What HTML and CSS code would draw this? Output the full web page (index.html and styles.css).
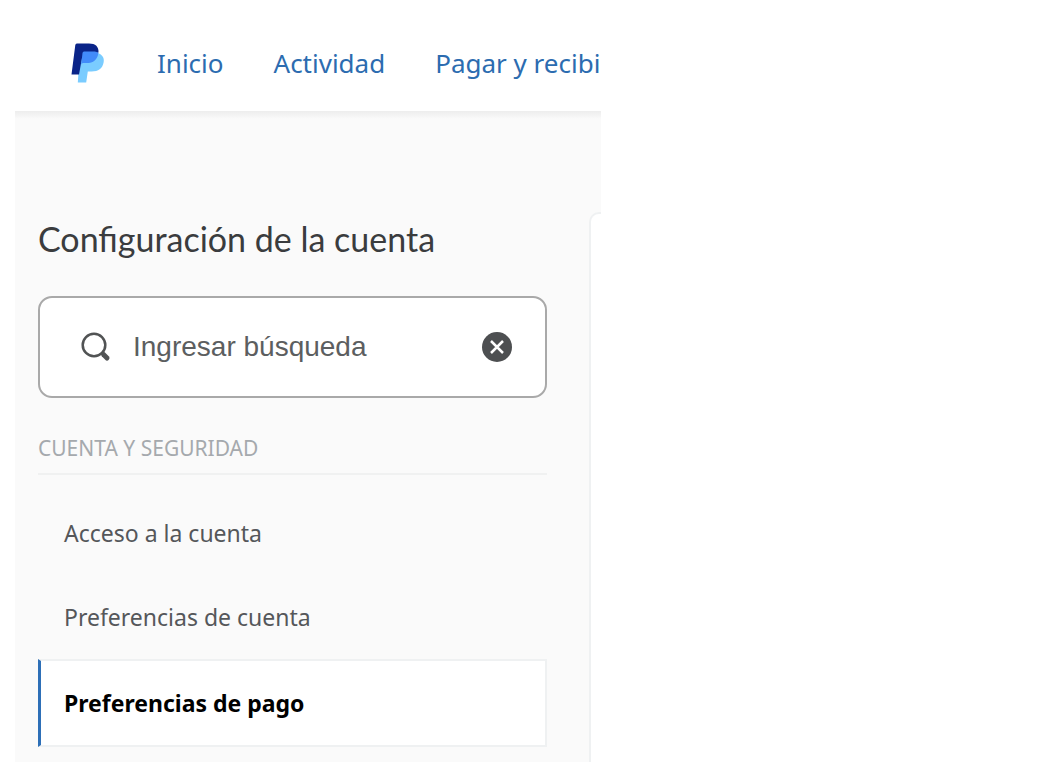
FILE: index.html
```html
<!DOCTYPE html>
<html lang="es">

<head>
    <meta charset="UTF-8">
    <title>Configuración de la cuenta</title>
    <link rel="stylesheet" href="styles.css">
</head>

<body>
    <div class="page">
        <header class="header">
            <a class="logo" href="#" aria-label="PayPal">
                <svg width="34" height="40" viewBox="0 0 34 40">
                    <path fill="#7accff" d="M9 8h14l5 2.500c4 2 5.500 5 4.600 9-1.100 6-5.200 9-12 9h-3.800L15.200 39.500H6.800z" />
                    <path fill="#0a2488" d="M5.800.5H18c6.500 0 10 3.300 9.500 9L11 15 8 31.500H.5L4.300 2Q4.600.5 5.800.5z" />
                    <path fill="#428bfa" d="M13 8.500h9c2.200 0 4 .4 5.400 1.200-.8 6.800-5 10.400-12 10.400h-3.300q-1.600 0-1.900 1.600L11.500 10Q11.700 8.500 13 8.500z" />
                </svg>
            </a>
            <nav class="nav">
                <a href="#">Inicio</a>
                <a href="#">Actividad</a>
                <a href="#">Pagar y recibir</a>
            </nav>
        </header>

        <div class="content">
            <aside class="sidebar">
                <h1>Configuración de la cuenta</h1>
                <form class="search">
                    <svg class="search-icon" width="30" height="30" viewBox="0 0 30 30" fill="none" stroke="#515354">
                        <circle cx="13" cy="13" r="11.300" stroke-width="2.500" />
                        <path stroke-width="3" d="M20.500 20.500l3 3" />
                        <path stroke-width="5" stroke-linecap="round" d="M22.500 22.500l3.500 3.500" />
                    </svg>
                    <input class="search-input" type="text" aria-label="Ingresar búsqueda" placeholder="Ingresar búsqueda">
                    <button class="clear-button" type="reset" aria-label="Borrar">
                        <svg width="30" height="30" viewBox="0 0 30 30">
                            <circle cx="15" cy="15" r="15" fill="#4d4f51" />
                            <path stroke="#fff" stroke-width="2.500" d="M9 9l12 12M21 9l-12 12" />
                        </svg>
                    </button>
                </form>
                <h2>Cuenta y seguridad</h2>
                <ul class="menu">
                    <li><a href="#">Acceso a la cuenta</a></li>
                    <li><a href="#">Preferencias de cuenta</a></li>
                    <li><a class="active" href="#">Preferencias de pago</a></li>
                </ul>
            </aside>
            <main class="panel"></main>
        </div>
    </div>
</body>

</html>
```
FILE: styles.css
```css
* {
    box-sizing: border-box;
}

body {
    margin: 0;
    padding-left: 15px;
    display: grid;
    grid-template-columns: 13fr 10fr;
    min-height: 100vh;
    background-color: #fff;
    font-family: 'Noto Sans', 'Open Sans', sans-serif;
}

a {
    text-decoration: none;
}

.page {
    display: flex;
    flex-direction: column;
    min-width: 0;
    overflow: hidden;
}

.header {
    display: flex;
    align-items: center;
    gap: 52px;
    height: 111px;
    padding: 14px 0 0 56px;
}

.logo,
.logo svg {
    display: block;
    flex-shrink: 0;
}

.nav {
    display: flex;
    gap: 50px;
    white-space: nowrap;
}

.nav a {
    color: #2c6cb0;
    font-size: 26px;
    line-height: 32px;
}

.content {
    flex: 1;
    display: flex;
    gap: 42px;
    padding-left: 23px;
    background: linear-gradient(#ededed, #fafafa 8px);
}

.sidebar {
    flex: 1;
    min-width: 0;
    padding-top: 108px;
}

h1 {
    margin: 0 0 37px;
    color: #3a3c3e;
    font-family: Lato, sans-serif;
    font-size: 34px;
    font-weight: 400;
    line-height: 40px;
}

.search {
    display: flex;
    align-items: center;
    height: 102px;
    padding: 0 33px 0 41px;
    border: 2px solid #a9a9a9;
    border-radius: 14px;
    background-color: #fff;
}

.search-icon {
    flex-shrink: 0;
}

.search-input {
    flex: 1;
    min-width: 0;
    padding: 0 22px;
    border: none;
    outline: none;
    background: none;
    color: #5c5e60;
    font-family: 'Liberation Sans', Arial, sans-serif;
    font-size: 28px;
}

.search-input::placeholder {
    color: #5c5e60;
}

.clear-button {
    padding: 0;
    border: none;
    background: none;
    cursor: pointer;
}

.clear-button svg {
    display: block;
}

h2 {
    margin: 34px 0 0;
    padding-bottom: 9px;
    border-bottom: 2px solid #f0f1f1;
    color: #a5a9ad;
    font-size: 21px;
    font-weight: 400;
    line-height: 32px;
    text-transform: uppercase;
}

.menu {
    margin: 0;
    padding: 16px 0 0;
    list-style: none;
}

.menu a {
    display: block;
    padding: 26px 23px;
    color: #55575a;
    font-size: 23px;
    line-height: 32px;
    border-left: 3px solid transparent;
}

.menu .active {
    border: 2px solid #eff1f2;
    border-left: 3px solid #2d6fb7;
    background-color: #fff;
    color: #000;
    font-weight: 700;
}

.panel {
    width: 12px;
    margin-top: 101px;
    border: 2px solid #eff1f2;
    border-width: 2px 0 0 2px;
    border-top-left-radius: 10px;
    background-color: #fff;
}
```
